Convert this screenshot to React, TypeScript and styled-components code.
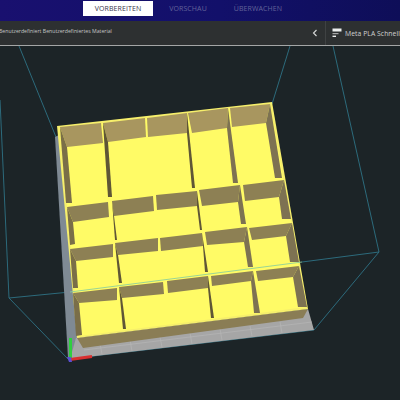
import React from 'react'
import styled, { createGlobalStyle } from 'styled-components'

const GlobalStyle = createGlobalStyle`
  html, body {
    margin: 0;
    padding: 0;
    background: #1c2427;
  }
`
const Page = styled.div`
  width: 400px;
  height: 400px;
  overflow: hidden;
  display: flex;
  flex-direction: column;
  font-family: 'Open Sans', 'Liberation Sans', sans-serif;
`
const TopBar = styled.div`
  height: 21px;
  flex: none;
  display: flex;
  align-items: flex-start;
  padding: 1px 0 0 83px;
  box-sizing: border-box;
  background: linear-gradient(90deg, #19106f, #12106a 55%, #0e0e58);
`
const Tab = styled.div<{ $active?: boolean }>`
  width: 70px;
  height: 15px;
  display: flex;
  align-items: center;
  justify-content: center;
  font-size: 7px;
  letter-spacing: 0.1px;
  background: ${({ $active }) => ($active ? '#fff' : 'transparent')};
  color: ${({ $active }) => ($active ? '#34344a' : '#63639a')};
`
const SettingsBar = styled.div`
  height: 25px;
  flex: none;
  display: flex;
  align-items: stretch;
  box-sizing: border-box;
  background: #2d3031;
  border-bottom: 1px solid #a4a6a6;
  overflow: hidden;
`
const Material = styled.div`
  flex: 1;
  margin-left: -1px;
  font-size: 5.2px;
  line-height: 21px;
  color: #c4c6c6;
  white-space: nowrap;
`
const Chevron = styled.div`
  width: 20px;
  display: flex;
  align-items: center;
  justify-content: center;
`
const Profile = styled.div`
  width: 75px;
  flex: none;
  box-sizing: border-box;
  display: flex;
  align-items: center;
  gap: 3px;
  padding-left: 6px;
  border-left: 1px solid #3f4243;
  font-size: 6.8px;
  letter-spacing: 0.05px;
  color: #cfd1d1;
  white-space: nowrap;
`
const ProfileIcon = styled.svg`
  flex: none;
  width: 10px;
  height: 10px;
`
const Viewport = styled.div`
  flex: 1;
  background: #1c2427;
`
const Scene = styled.svg`
  display: block;
  width: 400px;
  height: 354px;
  filter: blur(0.3px);
`

type Kind = 'back' | 'left' | 'sliver' | 'right'

const wallColors: Record<Kind, string> = {
  back: '#8d8054',
  left: '#7a6e48',
  sliver: '#5f5636',
  right: '#7d7252',
}

// wall faces of the box, row by row
const walls: [Kind, string][] = [
  ['back', '60,127 101,123 103,143 67,147'],
  ['left', '60,127 67,147 72,203 66,203'],
  ['back', '103,123 145,118 146,137 108,142'],
  ['sliver', '103,123 108,142 112,197 108,197'],
  ['back', '147,118 187,113 187,133 148,137'],
  ['sliver', '187,113 195,188 192,188 187,133'],
  ['back', '188,113 228,108 227,128 192,133'],
  ['right', '228,108 238,183 233,183 227,128'],
  ['back', '230,108 270,104 266,123 232,127'],
  ['right', '270,104 282,178 275,178 266,123'],

  ['back', '67,207 108,202 109,217 73,222'],
  ['left', '67,207 73,222 75,244 70,245'],
  ['back', '112,201 153,196 154,211 114,216'],
  ['sliver', '112,201 114,216 117,240 115,240'],
  ['back', '156,195 197,191 197,206 157,210'],
  ['sliver', '197,191 202,230 200,230 197,206'],
  ['back', '199,190 240,185 238,202 202,206'],
  ['right', '240,185 246,224 241,224 238,202'],
  ['back', '243,185 284,180 279,197 245,201'],
  ['right', '284,180 291,219 282,219 279,197'],

  ['back', '70,249 113,244 113,257 76,261'],
  ['left', '70,249 76,261 78,288 73,288'],
  ['back', '115,243 158,238 158,251 118,255'],
  ['sliver', '115,243 118,255 122,283 119,283'],
  ['back', '160,238 202,233 203,246 161,251'],
  ['sliver', '202,233 208,272 205,272 203,246'],
  ['back', '205,232 247,227 244,242 207,245'],
  ['right', '247,227 253,267 248,267 244,242'],
  ['back', '249,228 292,223 286,236 252,240'],
  ['right', '292,223 299,262 290,262 286,236'],

  ['back', '73,293 117,288 117,300 79,303'],
  ['left', '73,293 79,303 82,335 76,336'],
  ['back', '119,287 163,282 164,294 122,298'],
  ['sliver', '119,287 122,298 126,329 123,329'],
  ['back', '167,281 208,276 208,288 168,293'],
  ['sliver', '208,276 214,318 211,318 208,288'],
  ['back', '211,276 253,271 251,281 212,286'],
  ['right', '253,271 260,313 254,313 251,281'],
  ['back', '256,271 299,266 293,277 258,281'],
  ['right', '299,266 307,307 298,307 293,277'],
]

const frame = [
  '0,100 9,298 68,359 314,330 379,252 333,46',
  '19,46 56,137',
  '290,46 272,104',
  '9,298 70,292',
  '302,262 379,252',
]

const gridLines = [
  '100,344 102,354', '130,340 132,351', '160,337 162,347', '190,333 192,344',
  '220,329 222,340', '250,326 252,336', '280,322 282,333',
  '84,350 312,322',
]

function BoxScene() {
  return (
    <Scene viewBox="0 46 400 354">
      {frame.map((p, i) => (
        <polyline key={i} points={p} fill="none" stroke="#2f7386" strokeWidth="0.9" />
      ))}
      <polygon points="55,137 59,135 80,340 71,357 68,358" fill="#7f8a94" />
      <polygon points="76,338 308,309 314,330 70,359" fill="#a6a6a6" />
      {gridLines.map((p, i) => (
        <polyline key={i} points={p} fill="none" stroke="#b8b8b8" strokeWidth="0.6" />
      ))}
      <polygon points="77,338 308,309 303,318 83,348" fill="#8a7d55" />
      <polygon points="57,126 272,102 308,309 77,338" fill="#f6ef6c" />
      <polygon points="60,128 270,104 306,307 79,336" fill="#fffb66" />
      {walls.map(([kind, p], i) => (
        <polygon key={i} points={p} fill={i < 10 && kind === 'back' ? '#a8965f' : wallColors[kind]} />
      ))}
      <polyline points="70,292 302,262" fill="none" stroke="#8fd09a" strokeWidth="0.9" />
      <polyline points="70.5,338 70.5,358" fill="none" stroke="#2fcf3f" strokeWidth="3" />
      <polyline points="70,359.5 92,356.5" fill="none" stroke="#d82f2f" strokeWidth="3" />
      <polygon points="67,357 71,357 72,362 69,362" fill="#5a4fd0" />
    </Scene>
  )
}

export default function App() {
  return (
    <Page>
      <GlobalStyle />
      <TopBar>
        <Tab $active>VORBEREITEN</Tab>
        <Tab>VORSCHAU</Tab>
        <Tab>ÜBERWACHEN</Tab>
      </TopBar>
      <SettingsBar>
        <Material>Benutzerdefiniert Benutzerdefiniertes Material</Material>
        <Chevron>
          <svg width="8" height="8" viewBox="0 0 8 8">
            <polyline points="5.5,1 2.5,4 5.5,7" fill="none" stroke="#d8dada" strokeWidth="1.1" />
          </svg>
        </Chevron>
        <Profile>
          <ProfileIcon viewBox="0 0 10 10">
            <rect x="0.5" y="0.5" width="9" height="3" fill="#eceeee" />
            <rect x="0.5" y="5" width="6" height="1.2" fill="#a5a7a7" />
            <rect x="0.5" y="7.6" width="3.5" height="1.4" fill="#eceeee" />
          </ProfileIcon>
          <span>Meta PLA Schnell</span>
        </Profile>
      </SettingsBar>
      <Viewport>
        <BoxScene />
      </Viewport>
    </Page>
  )
}
